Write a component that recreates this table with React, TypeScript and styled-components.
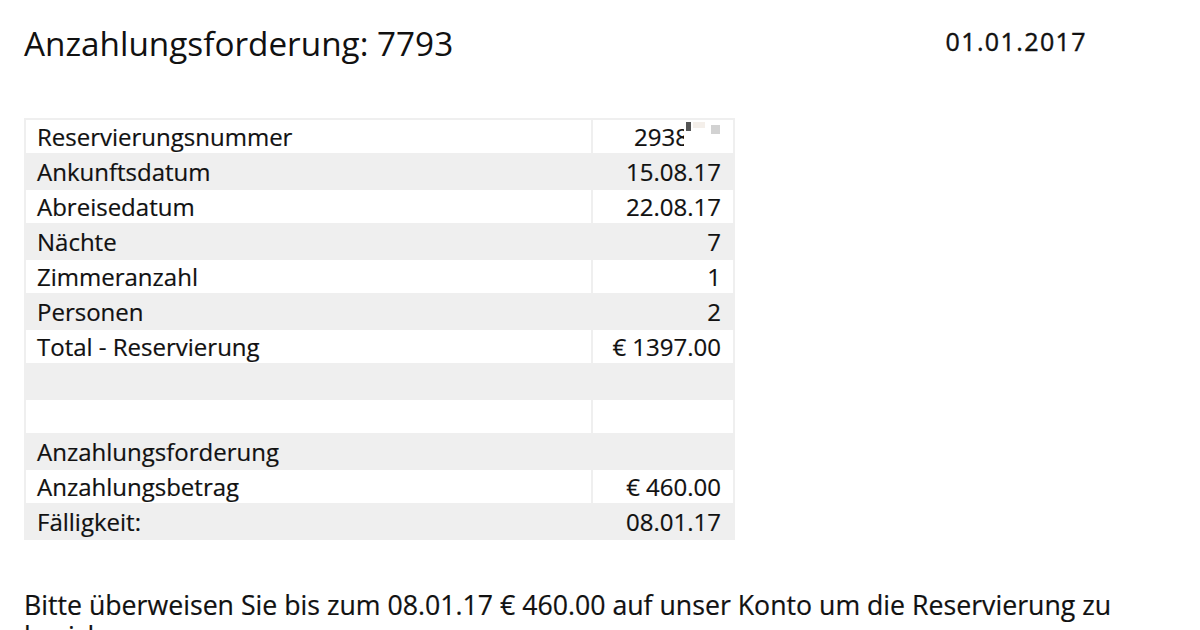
import React from "react"
import styled, { createGlobalStyle } from "styled-components"

const GlobalStyle = createGlobalStyle`
    body {
        margin: 0;
        background: #fff;
        font-family: "Open Sans", "Noto Sans", sans-serif;
        color: #111;
    }
`

interface RowI {
    label: string
    value: string
}

const rows: RowI[] = [
    { label: "Reservierungsnummer", value: "2938" },
    { label: "Ankunftsdatum", value: "15.08.17" },
    { label: "Abreisedatum", value: "22.08.17" },
    { label: "Nächte", value: "7" },
    { label: "Zimmeranzahl", value: "1" },
    { label: "Personen", value: "2" },
    { label: "Total - Reservierung", value: "€ 1397.00" },
    { label: "", value: "" },
    { label: "", value: "" },
    { label: "Anzahlungsforderung", value: "" },
    { label: "Anzahlungsbetrag", value: "€ 460.00" },
    { label: "Fälligkeit:", value: "08.01.17" },
]

export default function App() {
    return (
        <>
            <GlobalStyle />
            <Page>
                <Header>
                    <Title>Anzahlungsforderung: 7793</Title>
                    <DateText>01.01.2017</DateText>
                </Header>
                <Table>
                    <tbody>
                        {rows.map((row, i) => (
                            <Row key={i} striped={i % 2 === 1}>
                                <LabelCell>{row.label}</LabelCell>
                                <ValueCell>
                                    {i === 0 ? (
                                        <Masked>
                                            {row.value}
                                            <Blur />
                                        </Masked>
                                    ) : row.value}
                                </ValueCell>
                            </Row>
                        ))}
                    </tbody>
                </Table>
                <Note>
                    Bitte überweisen Sie bis zum 08.01.17 € 460.00 auf unser Konto um die Reservierung zu besichern:
                </Note>
            </Page>
        </>
    )
}

const Page = styled.div`
    padding: 18px 0 0 24px;
    width: 1090px;
`

const Header = styled.div`
    display: flex;
    justify-content: space-between;
    align-items: flex-start;
    padding-right: 27px;
`

const Title = styled.h1`
    margin: 0;
    font-size: 33.3px;
    font-weight: 400;
    line-height: 50px;
`

const DateText = styled.div`
    font-size: 25px;
    font-weight: 500;
    line-height: 46px;
    letter-spacing: 1.4px;
    -webkit-text-stroke: 0.4px #111;
`

const Table = styled.table`
    margin-top: 50px;
    width: 711px;
    border-collapse: separate;
    border-spacing: 2px;
    background: #efefef;
`

const Row = styled.tr<{ striped: boolean }>`
    height: 33px;
    background: ${props => props.striped ? "#efefef" : "#fff"};
`

const LabelCell = styled.td`
    width: 542px;
    padding: 0 12px 0 11px;
    font-size: 24px;
    font-weight: 400;
    line-height: 33px;
    -webkit-text-stroke: 0.2px #111;
`

const ValueCell = styled.td`
    padding: 0 12px;
    font-size: 24px;
    font-weight: 400;
    line-height: 33px;
    text-align: right;
    white-space: nowrap;
    -webkit-text-stroke: 0.2px #111;
`

const Masked = styled.span`
    position: relative;
    display: inline-block;
    vertical-align: top;
    padding-right: 32px;
`

const Blur = styled.span`
    position: absolute;
    right: 0;
    top: 0;
    width: 37px;
    height: 33px;
    background-color: #fff;
    background-image: linear-gradient(#f4efea, #f4efea);
    background-size: 12px 6px;
    background-position: 9px 2px;
    background-repeat: no-repeat;
    &::before {
        content: "";
        position: absolute;
        left: 2px;
        top: 2px;
        width: 5px;
        height: 9px;
        background: #555;
    }
    &::after {
        content: "";
        position: absolute;
        left: 27px;
        top: 5px;
        width: 9px;
        height: 9px;
        background: #d2d2d2;
    }
`

const Note = styled.p`
    margin: 49px 0 0;
    width: 1110px;
    font-size: 26.7px;
    line-height: 31px;
    font-weight: 400;
    -webkit-text-stroke: 0.2px #111;
`
